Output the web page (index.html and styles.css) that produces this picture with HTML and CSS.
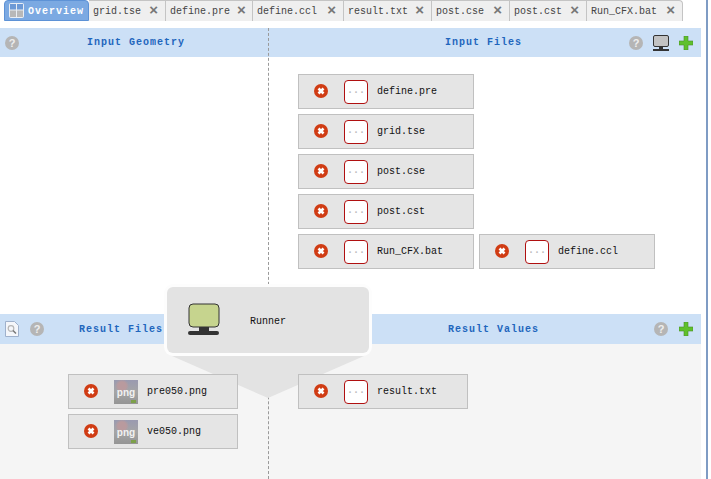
FILE: index.html
```html
<!DOCTYPE html>
<html lang="en">
<head>
<meta charset="utf-8">
<title>Overview</title>
<link rel="stylesheet" href="styles.css">
</head>
<body>
<svg class="defs" width="0" height="0" aria-hidden="true">
  <symbol id="del" viewBox="0 0 14 14">
    <circle cx="7" cy="7" r="7" fill="#d03c14"/>
    <path d="M4.500 4.500l5 5M9.500 4.500l-5 5" stroke="#fff" stroke-width="2.600" fill="none"/>
  </symbol>
  <symbol id="plus" viewBox="0 0 14 14">
    <path d="M5 0h4v5h5v4h-5v5h-4v-5h-5v-4h5z" fill="#5fc02c" stroke="#4a8f2a" stroke-width=".6"/>
  </symbol>
</svg>
<div class="page">
  <main class="main">
    <nav class="tabs">
      <div class="tab tab-active">
        <svg class="tab-icon" width="15" height="15" viewBox="0 0 15 15"><rect width="15" height="15" rx="2" fill="#e9eef4"/><rect x="1" y="1" width="6" height="5.500" fill="#6d9ad6"/><rect x="8" y="1" width="6" height="5.500" fill="#6d9ad6"/><rect x="1" y="7.500" width="6" height="6.500" fill="#b8b8b8"/><rect x="8" y="7.500" width="6" height="6.500" fill="#b8b8b8"/></svg>
        <span>Overview</span>
      </div>
      <div class="tab"><span>grid.tse</span><b class="close">×</b></div>
      <div class="tab"><span>define.pre</span><b class="close">×</b></div>
      <div class="tab"><span>define.ccl</span><b class="close">×</b></div>
      <div class="tab"><span>result.txt</span><b class="close">×</b></div>
      <div class="tab"><span>post.cse</span><b class="close">×</b></div>
      <div class="tab"><span>post.cst</span><b class="close">×</b></div>
      <div class="tab tab-last"><span>Run_CFX.bat</span><b class="close">×</b></div>
    </nav>

    <section class="band band-top">
      <div class="head head-left">
        <span class="help">?</span>
        <h2 class="title title-geo">Input Geometry</h2>
      </div>
      <div class="head head-right">
        <h2 class="title title-files">Input Files</h2>
        <span class="help">?</span>
        <svg class="monitor" width="16" height="16" viewBox="0 0 16 16"><rect x=".5" y=".5" width="15" height="11" rx="1.500" fill="#c2c2c2" stroke="#333"/><rect x="6" y="12" width="4" height="2" fill="#333"/><rect x="0" y="14" width="16" height="2" fill="#333"/></svg>
        <svg class="ico"><use href="#plus"/></svg>
      </div>
      <div class="col-left"></div>
      <div class="col-right files">
        <div class="row"><div class="file"><svg class="ico del"><use href="#del"/></svg><i class="doc">...</i><span>define.pre</span></div></div>
        <div class="row"><div class="file"><svg class="ico del"><use href="#del"/></svg><i class="doc">...</i><span>grid.tse</span></div></div>
        <div class="row"><div class="file"><svg class="ico del"><use href="#del"/></svg><i class="doc">...</i><span>post.cse</span></div></div>
        <div class="row"><div class="file"><svg class="ico del"><use href="#del"/></svg><i class="doc">...</i><span>post.cst</span></div></div>
        <div class="row">
          <div class="file"><svg class="ico del"><use href="#del"/></svg><i class="doc">...</i><span>Run_CFX.bat</span></div>
          <div class="file"><svg class="ico del"><use href="#del"/></svg><i class="doc">...</i><span>define.ccl</span></div>
        </div>
      </div>
    </section>

    <section class="band band-bottom">
      <div class="head head-left">
        <svg class="search" width="14" height="16" viewBox="0 0 14 16"><path d="M.5.5h9l4 4v11h-13z" fill="#f4f6fa" stroke="#9fb1cc"/><circle cx="6" cy="7.500" r="2.800" fill="none" stroke="#b5b5b5" stroke-width="1.200"/><path d="M8 9.500l3 3" stroke="#777" stroke-width="1.500"/></svg>
        <span class="help">?</span>
        <h2 class="title title-results">Result Files</h2>
      </div>
      <div class="head head-right">
        <h2 class="title title-values">Result Values</h2>
        <span class="help">?</span>
        <svg class="ico"><use href="#plus"/></svg>
      </div>
      <div class="col-left files files-png">
        <div class="row"><div class="file file-short"><svg class="ico del"><use href="#del"/></svg><i class="png">png</i><span>pre050.png</span></div></div>
        <div class="row"><div class="file file-short"><svg class="ico del"><use href="#del"/></svg><i class="png">png</i><span>ve050.png</span></div></div>
      </div>
      <div class="col-right files">
        <div class="row"><div class="file file-short"><svg class="ico del"><use href="#del"/></svg><i class="doc">...</i><span>result.txt</span></div></div>
      </div>
    </section>

    <div class="divider"></div>
    <svg class="funnel" width="192" height="42" viewBox="0 0 192 42"><path d="M0 0h192l-96 42z" fill="#e3e3e3"/></svg>
    <div class="runner">
      <svg class="runner-icon" width="32" height="32" viewBox="0 0 32 32"><rect x="1" y="1" width="30" height="23" rx="4" fill="#c6d48e" stroke="#333"/><rect x="11" y="24" width="10" height="5" fill="#333"/><rect x="0" y="28" width="31" height="4" rx="2" fill="#333"/></svg>
      <span class="runner-name">Runner</span>
    </div>
  </main>
  <div class="edge"></div>
</div>
</body>
</html>
```
FILE: styles.css
```css
* { box-sizing: border-box; }
html, body { margin: 0; height: 100%; }
body {
  background: #fff;
  overflow: hidden;
  font: 10px/12px "Liberation Mono", "DejaVu Sans Mono", monospace;
  color: #111;
}
.defs { position: absolute; }
.page { display: flex; height: 479px; }
.main { position: relative; width: 701px; height: 479px; flex: none; }
.edge { width: 2px; height: 479px; margin-left: 5px; background: #7f9cc4; }

.tabs { display: flex; height: 21px; padding-left: 4px; }
.tab {
  display: flex;
  align-items: center;
  height: 21px;
  padding: 0 7px 0 4px;
  background: #efefef;
  border-top: 1px solid #c4c4c4;
  border-right: 1px solid #c4c4c4;
  color: #444;
  white-space: nowrap;
}
.tab span { margin: 2px 7px 0 0; }
.tab:nth-child(2) { width: 77px; }
.tab:nth-child(3) { width: 87px; }
.tab:nth-child(4) { width: 91px; }
.tab:nth-child(5) { width: 88px; }
.tab:nth-child(6) { width: 78px; }
.tab:nth-child(7) { width: 77px; }
.tab-last { width: 96px; border-radius: 0 4px 0 0; }
.tab .close { margin: -2px 0 0 auto; font: 700 15px/12px "Liberation Sans", sans-serif; color: #777; }
.tab-active {
  width: 85px;
  padding: 0 0 0 4px;
  background: #7ba9e2;
  border: 1px solid #5d92d6;
  border-radius: 4px 4px 0 0;
  color: #fff;
  font-weight: 700;
}
.tab-active span { margin: 2px 0 0; letter-spacing: 1px; }
.tab-icon { margin-right: 4px; flex: none; }

.band { display: grid; grid-template-columns: 268px 433px; }
.band-top { height: 286px; margin-top: 7px; grid-template-rows: 29px auto; }
.band-bottom { height: 165px; background: #f5f5f5; grid-template-rows: 30px auto; }
.head { display: flex; align-items: center; background: #cce0f6; }
.head-right { padding-right: 8px; }
.title { margin: 0; font-size: 10px; font-weight: 700; letter-spacing: 1px; color: #1f66bd; white-space: nowrap; }
.ico { width: 14px; height: 14px; flex: none; }
.help {
  width: 14px;
  height: 14px;
  flex: none;
  border-radius: 50%;
  background: #b5b5b5;
  color: #eee;
  font: 700 11px/14px "Liberation Sans", sans-serif;
  text-align: center;
}
.head-left { padding-left: 5px; }
.title-geo { margin-left: 68px; }
.title-files { margin: 0 auto 0 177px; }
.monitor { flex: none; margin: 0 10px; }
.head-right h2 + .help + .ico { margin-left: 11px; }
.search { margin-right: 11px; flex: none; }
.title-results { margin: 1px 0 0 35px; }
.title-values { margin: 1px auto 0 180px; }

.files { position: relative; z-index: 1; display: flex; flex-direction: column; gap: 5px; padding: 17px 0 0 30px; }
.files-png { padding-left: 68px; padding-top: 30px; }
.band-bottom .col-right { padding-top: 30px; }
.row { display: flex; gap: 5px; }
.file {
  display: flex;
  align-items: center;
  width: 176px;
  height: 35px;
  padding-left: 15px;
  background: #e5e5e5;
  border: 1px solid #c0c0c0;
}
.file span { margin-top: 1px; }
.file-short { width: 170px; }
.del { margin: -1px 16px 0 0; }
.doc {
  width: 24px;
  height: 24px;
  margin-right: 9px;
  flex: none;
  background: #fff;
  border: 1.5px solid #b01010;
  border-radius: 4px;
  color: #bbb;
  font: 700 10px/20px "Liberation Mono", monospace;
  text-align: center;
}
.png {
  position: relative;
  width: 24px;
  height: 24px;
  margin-right: 9px;
  flex: none;
  background: radial-gradient(circle at 8px 6px, #b99a9e 0 4px, transparent 7px), linear-gradient(#9a9ab0, #a5a5a5 50%, #959595);
  color: #f2f2f2;
  font: 700 10px/25px "Liberation Sans", sans-serif;
  text-align: center;
}
.png::after {
  content: "";
  position: absolute;
  right: 2px;
  bottom: 1px;
  width: 5px;
  height: 3px;
  background: #7da04a;
}

.divider { position: absolute; left: 268px; top: 28px; bottom: 0; border-left: 1px dashed #9a9a9a; }
.runner {
  position: absolute;
  left: 167px;
  top: 287px;
  display: flex;
  width: 202px;
  height: 66px;
  padding: 16px 0 0 21px;
  background: #e3e3e3;
  border-radius: 6px;
  box-shadow: 0 0 0 3px #fdfdfd;
}
.runner-icon { flex: none; }
.runner-name { margin: 13px 0 0 30px; }
.funnel { position: absolute; left: 172px; top: 356px; }
```
